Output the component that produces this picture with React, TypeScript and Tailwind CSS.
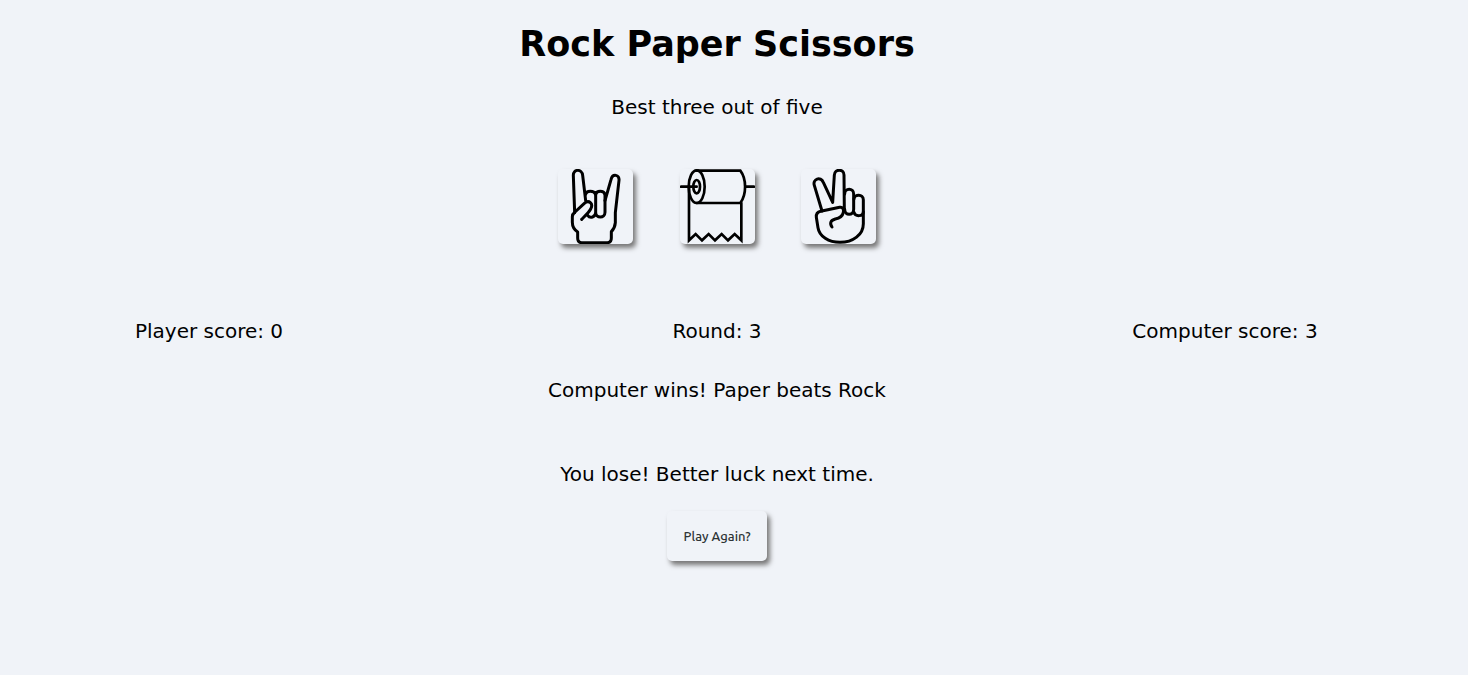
import type { ReactNode } from "react";

function Rock() {
  return (
    <svg viewBox="24 27 225 225" className="size-full" fill="none" stroke="#000" strokeWidth="9" strokeLinecap="round" strokeLinejoin="round" aria-hidden="true">
      <path d="M74 158 L70 47 C69 26 96 26 98 46 L107 122" />
      <path d="M107 103 C109 91 132 91 137 103 C140 91 161 91 165 103" />
      <path d="M165 122 L183 59 C188 39 209 44 207 61 L196 158 V188 C195 202 191 208 184 215 V234 Q184 248 172 248 H95 Q83 248 83 234 V216 C72 209 67 200 67 187 V170 C67 163 70 160 75 156 L103 130 C117 118 131 131 122 147 C117 157 106 167 95 178" />
      <path d="M113 166 C120 176 137 172 137 157 V103 M165 103 V157 C165 176 137 176 137 157" />
    </svg>
  );
}

function Paper() {
  return (
    <svg viewBox="24 27 225 225" className="size-full" fill="none" stroke="#000" strokeWidth="8" strokeLinecap="round" strokeLinejoin="miter" aria-hidden="true">
      <ellipse cx="74" cy="80" rx="24" ry="49" />
      <ellipse cx="74" cy="80" rx="10" ry="20" />
      <path d="M27 80 H74 M220 80 H246" />
      <path d="M74 32 H205 C224 57 224 103 205 129 H74" />
      <path d="M51 83 V241 L71 222 L90 241 L110 222 L129 241 L149 222 L168 241 L188 222 L208 241 V129" />
    </svg>
  );
}

function Scissors() {
  return (
    <svg viewBox="24 27 225 225" className="size-full" fill="none" stroke="#000" strokeWidth="9" strokeLinecap="round" strokeLinejoin="round" aria-hidden="true">
      <path d="M87 153 L64 76 C58 57 83 48 91 67 L119 127 L124 45 C125 26 153 26 153 45 L154 150" />
      <path d="M155 102 C155 83 182 83 182 102 V148 C182 168 155 168 155 148" />
      <path d="M183 117 C184 102 211 102 211 119 V155 C211 170 187 171 183 157" />
      <path d="M211 155 V191 C211 224 180 247 141 247 C107 247 79 229 75 203 L70 172 C69 161 74 156 83 154 L140 142 C149 140 153 148 151 157 C148 171 138 175 127 177 C113 181 109 189 117 201" />
    </svg>
  );
}

function Choice({ label, children }: { label: string; children: ReactNode }) {
  return (
    <button
      type="button"
      aria-label={label}
      className="size-[75px] cursor-pointer rounded-[5px] bg-[#f0f3f8] shadow-[3px_4px_5px_#777]"
    >
      {children}
    </button>
  );
}

export default function App() {
  return (
    <main className="min-h-screen bg-[#f0f3f8] pt-5 pr-[34px] text-center font-['DejaVu_Sans',sans-serif] text-xl leading-6 text-black">
      <h1 className="text-[35px] leading-12 font-bold">Rock Paper Scissors</h1>
      <p className="mt-[27px]">Best three out of five</p>
      <div className="mx-auto mt-[50px] flex w-[318px] justify-between">
        <Choice label="Rock">
          <Rock />
        </Choice>
        <Choice label="Paper">
          <Paper />
        </Choice>
        <Choice label="Scissors">
          <Scissors />
        </Choice>
      </div>
      <div className="mt-[75px] grid grid-cols-3 gap-[90px]">
        <p>Player score: 0</p>
        <p>Round: 3</p>
        <p>Computer score: 3</p>
      </div>
      <p className="mt-[35px]">Computer wins! Paper beats Rock</p>
      <p className="mt-[60px]">You lose! Better luck next time.</p>
      <button
        type="button"
        className="mt-[25px] h-[50px] w-[100px] cursor-pointer rounded-[5px] bg-[#f0f3f8] font-['Ubuntu','Noto_Sans',sans-serif] text-[13px] leading-4 font-medium text-[#2e3436] shadow-[3px_4px_5px_#777]"
      >
        Play Again?
      </button>
    </main>
  );
}
